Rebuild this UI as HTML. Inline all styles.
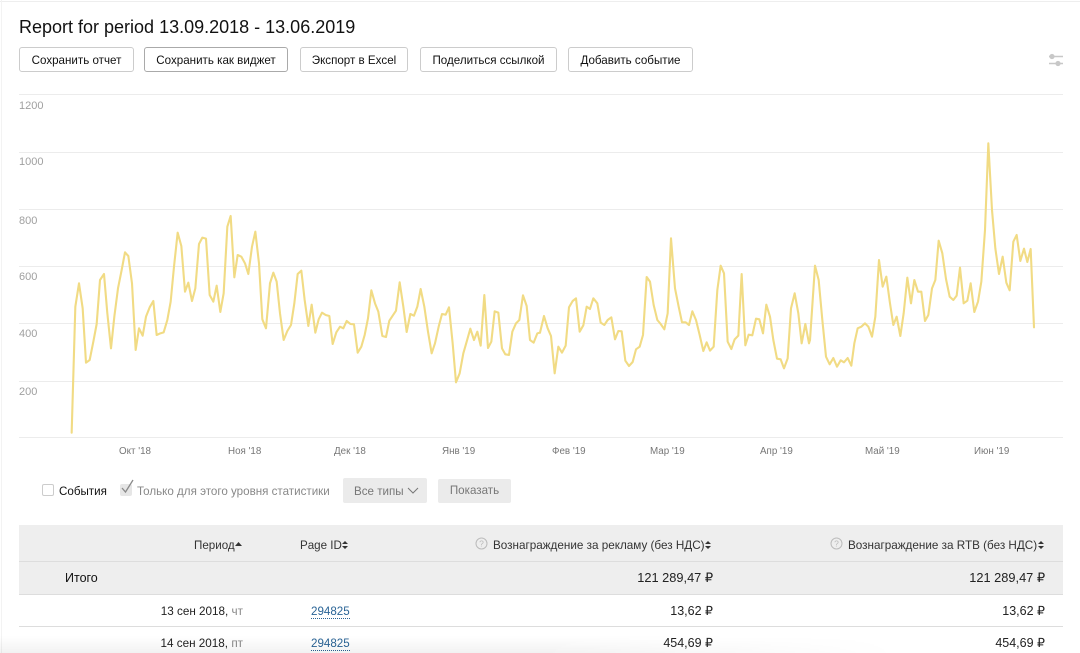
<!DOCTYPE html>
<html><head><meta charset="utf-8"><style>
html,body{margin:0;padding:0;background:#fff}
body{width:1080px;height:653px;overflow:hidden;position:relative;font-family:"Liberation Sans",sans-serif;color:#000}
.a{position:absolute;white-space:nowrap}
.b{position:absolute;top:47px;height:23px;border:1px solid #ccc;border-radius:3px;font-size:11.6px;line-height:26px;text-align:center;background:#fff;box-sizing:content-box;color:#111}
.y{position:absolute;left:19px;font-size:11px;color:#a0a0a0;line-height:14px}
.m{position:absolute;top:445px;font-size:9.8px;color:#777;line-height:14px}
.t{font-size:11.6px;line-height:16px;color:#222}
.h{font-size:11.7px;line-height:16px;color:#333}
.r{position:absolute;text-align:right;white-space:nowrap;font-size:12.5px;line-height:16px;color:#222}
.l{color:#2a6496;border-bottom:1px dotted #2a6496;line-height:13px;position:absolute;font-size:11.6px}
.g{color:#888}
</style></head><body>
<div class="a" style="left:0;top:1px;width:1080px;height:1px;background:#eee"></div>
<div class="a" style="left:1px;top:0;width:1px;height:653px;background:#f3f3f3"></div>
<div class="a" style="left:19px;top:16px;font-size:18px;line-height:22px;color:#111">Report for period 13.09.2018 - 13.06.2019</div>
<div class="b" style="left:19px;width:113px">Сохранить отчет</div>
<div class="b" style="left:144px;width:142px;border-color:#aaa">Сохранить как виджет</div>
<div class="b" style="left:300px;width:106px">Экспорт в Excel</div>
<div class="b" style="left:420px;width:135px">Поделиться ссылкой</div>
<div class="b" style="left:568px;width:123px">Добавить событие</div>
<svg class="a" style="left:1048px;top:53px" width="16" height="14" viewBox="0 0 16 14"><path d="M1 3.5H15M1 10.5H15" stroke="#c8c8c8" stroke-width="1.6" fill="none"/><circle cx="4" cy="3.5" r="2.6" fill="#c8c8c8"/><circle cx="10" cy="10.5" r="2.6" fill="#c8c8c8"/></svg>
<svg class="a" style="left:0;top:0" width="1080" height="470">
<g stroke="#ececec" stroke-width="1"><path d="M19 94.5H1063M19 152.5H1063M19 209.5H1063M19 266.5H1063M19 323.5H1063M19 381.5H1063M19 437.5H1063"/></g>
<g fill="none" stroke="#f1db84" stroke-width="6.3" stroke-linejoin="round" stroke-linecap="round">
<polyline transform="translate(0,200) scale(.33333)" points="215,698 226,320 237,250 248,325 258,488 269,480 280,425 290,372 300,240 312,222 322,340 333,445 343,350 354,265 365,210 375,157 385,168 396,250 407,450 417,385 428,407 438,350 449,322 460,303 470,405 481,400 491,397 502,360 512,305 522,200 533,98 544,138 555,275 565,248 576,303 586,265 597,132 607,113 618,116 629,285 640,305 650,257 661,336 671,280 682,80 692,48 703,232 713,165 724,170 735,190 745,222 756,140 766,95 777,190 787,358 798,385 810,250"/>
<polyline transform="translate(270,200) scale(.33333)" points="0,250 10,218 20,245 30,340 41,420 52,393 63,375 73,310 83,222 94,212 104,300 115,378 125,314 136,398 146,358 156,338 167,345 178,348 188,432 199,397 210,380 220,385 230,363 241,372 252,373 263,458 274,440 284,405 294,355 304,271 315,310 325,335 337,408 348,411 358,362 368,347 378,332 389,247 400,320 410,396 421,342 432,347 442,320 452,267 463,320 474,395 485,460 495,430 506,380 516,342 527,344 537,322 548,430 558,547 569,520 580,460 590,425 601,386 612,420 622,395 632,437 643,285 654,444 664,425 674,334 685,338 696,445 706,463 717,465 727,395 738,370 748,360 759,286 770,318 780,420 791,428 802,400 810,398"/>
<polyline transform="translate(540,200) scale(.33333)" points="0,398 12,348 23,385 33,408 44,520 55,440 66,458 77,437 87,322 98,303 108,295 119,395 130,376 140,320 150,327 160,295 172,310 182,368 193,375 203,360 214,352 225,418 235,393 245,394 256,482 267,498 278,486 288,448 299,440 309,405 320,231 330,245 341,315 352,360 362,372 373,388 383,340 393,115 405,265 416,320 426,367 437,367 447,375 457,334 468,360 479,405 490,453 500,427 510,452 521,440 532,270 542,197 552,220 563,425 574,447 584,418 595,407 605,222 616,436 626,404 637,406 648,356 658,358 669,400 679,314 690,350 700,420 711,476 722,478 732,505 743,475 753,325 764,280 775,340 785,430 796,372 807,430 810,420"/>
<polyline transform="translate(810,130) scale(.33333)" points="0,630 15,407 26,450 37,570 48,680 59,703 70,684 81,710 92,691 102,697 113,684 124,707 133,640 143,595 154,590 165,580 175,590 186,620 196,560 207,390 218,470 229,440 240,520 250,585 260,560 271,618 281,550 292,443 303,520 313,450 324,485 334,485 345,573 355,555 366,475 376,450 386,332 397,370 408,447 419,500 430,510 440,497 450,413 461,520 472,512 482,460 493,546 504,515 514,455 525,300 535,40 546,240 556,355 567,432 578,380 589,458 599,481 610,335 620,315 631,393 642,356 652,396 662,357 672,592"/>
</g></svg>
<div class="y" style="top:99px">1200</div><div class="y" style="top:155px">1000</div><div class="y" style="top:214px">800</div><div class="y" style="top:270px">600</div><div class="y" style="top:327px">400</div><div class="y" style="top:385px">200</div>
<div class="m" style="left:119px">Окт '18</div><div class="m" style="left:228px">Ноя '18</div><div class="m" style="left:334px">Дек '18</div><div class="m" style="left:442px">Янв '19</div><div class="m" style="left:552px">Фев '19</div><div class="m" style="left:650px">Мар '19</div><div class="m" style="left:760px">Апр '19</div><div class="m" style="left:865px">Май '19</div><div class="m" style="left:974px">Июн '19</div>
<div class="a" style="left:42px;top:484px;width:10px;height:10px;border:1px solid #ccc;border-radius:2px"></div>
<div class="a t" style="left:59px;top:484px;color:#111">События</div>
<div class="a" style="left:120px;top:484px;width:12px;height:12px;background:#e6e6e6;border-radius:2px"></div>
<svg class="a" style="left:120px;top:478px" width="16" height="16"><path d="M2 10L5.5 14L13 2" stroke="#8a8a8a" stroke-width="1.3" fill="none"/></svg>
<div class="a t" style="left:137px;top:484px;color:#888">Только для этого уровня статистики</div>
<div class="a" style="left:343px;top:478px;width:84px;height:25px;background:#ebebeb;border-radius:2px"></div>
<div class="a t" style="left:354px;top:484px;color:#777">Все типы</div>
<svg class="a" style="left:407px;top:487px" width="12" height="8"><path d="M1 1L6 6L11 1" stroke="#777" stroke-width="1" fill="none"/></svg>
<div class="a" style="left:438px;top:479px;width:73px;height:24px;background:#ebebeb;border-radius:2px;text-align:center;font-size:11.6px;line-height:24px;color:#777">Показать</div>
<div class="a" style="left:19px;top:525px;width:1044px;height:69px;background:#eee"></div>
<div class="a" style="left:19px;top:561px;width:1044px;height:1px;background:#ddd"></div>
<div class="a" style="left:19px;top:594px;width:1044px;height:1px;background:#ddd"></div>
<div class="a" style="left:19px;top:626px;width:1044px;height:1px;background:#ddd"></div>
<div class="a h" style="left:194px;top:538px;font-size:11.6px">Период</div>
<svg class="a" style="left:234px;top:541px" width="9" height="8"><path d="M1 5L4.5 1L8 5Z" fill="#333"/></svg>
<div class="a h" style="left:300px;top:538px;font-size:11.6px">Page ID</div>
<svg class="a" style="left:341px;top:540px" width="8" height="10"><path d="M1 4L4 1L7 4ZM1 6L4 9L7 6Z" fill="#333"/></svg>
<svg class="a" style="left:475px;top:537px" width="13" height="13"><circle cx="6.5" cy="6.5" r="5.5" stroke="#bbb" fill="none"/><text x="6.5" y="9.5" font-size="8.5" text-anchor="middle" fill="#bbb" font-family="Liberation Sans">?</text></svg>
<div class="a h" style="left:493px;top:538px">Вознаграждение за рекламу (без НДС)</div>
<svg class="a" style="left:704px;top:540px" width="8" height="10"><path d="M1 4L4 1L7 4ZM1 6L4 9L7 6Z" fill="#333"/></svg>
<svg class="a" style="left:830px;top:537px" width="13" height="13"><circle cx="6.5" cy="6.5" r="5.5" stroke="#bbb" fill="none"/><text x="6.5" y="9.5" font-size="8.5" text-anchor="middle" fill="#bbb" font-family="Liberation Sans">?</text></svg>
<div class="a h" style="left:848px;top:538px">Вознаграждение за RTB (без НДС)</div>
<svg class="a" style="left:1037px;top:540px" width="8" height="10"><path d="M1 4L4 1L7 4ZM1 6L4 9L7 6Z" fill="#333"/></svg>
<div class="a t" style="left:65px;top:570px;color:#111;font-size:12.5px">Итого</div>
<div class="r" style="right:367px;top:570px;font-size:12.8px">121 289,47 ₽</div><div class="r" style="right:35px;top:570px;font-size:12.8px">121 289,47 ₽</div>
<div class="r" style="right:837px;top:604px;font-size:11.7px">13 сен 2018, <span class="g">чт</span></div><div class="l" style="left:311px;top:605px">294825</div>
<div class="r" style="right:367px;top:603px">13,62 ₽</div><div class="r" style="right:35px;top:603px">13,62 ₽</div>
<div class="r" style="right:837px;top:636px;font-size:11.7px">14 сен 2018, <span class="g">пт</span></div><div class="l" style="left:311px;top:637px">294825</div>
<div class="r" style="right:367px;top:635px">454,69 ₽</div><div class="r" style="right:35px;top:635px">454,69 ₽</div>
<div class="a" style="left:0;top:636px;width:900px;height:17px;background:linear-gradient(to bottom,rgba(0,0,0,0),rgba(0,0,0,.05));-webkit-mask-image:linear-gradient(to right,#000 60%,transparent)"></div>
</body></html>
